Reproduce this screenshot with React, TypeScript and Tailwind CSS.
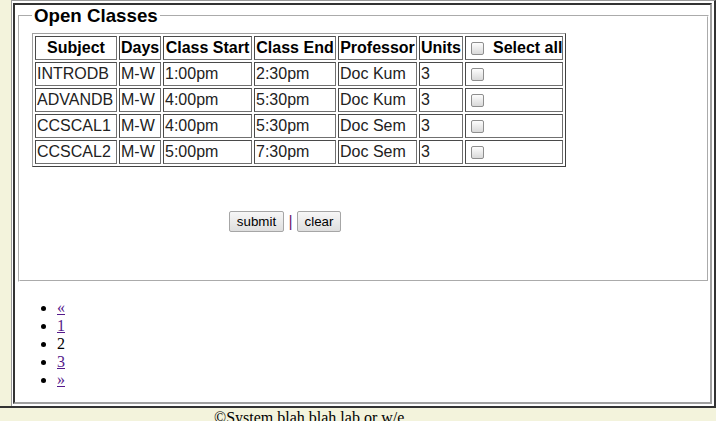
import React from "react";

type OpenClass = {
  subject: string;
  days: string;
  start: string;
  end: string;
  professor: string;
  units: string;
};

const classes: OpenClass[] = [
  { subject: "INTRODB", days: "M-W", start: "1:00pm", end: "2:30pm", professor: "Doc Kum", units: "3" },
  { subject: "ADVANDB", days: "M-W", start: "4:00pm", end: "5:30pm", professor: "Doc Kum", units: "3" },
  { subject: "CCSCAL1", days: "M-W", start: "4:00pm", end: "5:30pm", professor: "Doc Sem", units: "3" },
  { subject: "CCSCAL2", days: "M-W", start: "5:00pm", end: "7:30pm", professor: "Doc Sem", units: "3" },
];

// old-school grey checkbox
function Box() {
  return (
    <span className="block h-[13px] w-[13px] shrink-0 rounded-[2px] border border-[#8e8e8e] bg-linear-to-b from-[#fdfdfd] to-[#d9d9d9]" />
  );
}

const th =
  "h-[24px] border border-t-[#4a4a4a] border-l-[#4a4a4a] border-b-[#707070] border-r-[#707070] px-px py-px text-center align-middle font-bold text-black whitespace-nowrap";
const td =
  "h-[24px] border border-t-[#4a4a4a] border-l-[#4a4a4a] border-b-[#707070] border-r-[#707070] px-px py-px text-left align-middle text-[#222] whitespace-nowrap";

export default function App() {
  return (
    <div className="flex h-[421px] w-[716px] flex-col overflow-hidden bg-[#f3f3dc] font-['Liberation_Sans',Arial,sans-serif] text-[16px] leading-[18px]">
      {/* ── Main row ── */}
      <div className="flex h-[406px] shrink-0">
        <div className="w-[11px] shrink-0" />

        <div className="flex flex-1 border-l border-t border-l-[#9a9a9a] border-t-[#9a9a9a] bg-white pt-[2px] pb-[2px] pl-px pr-[2px] border-r-2 border-r-[#333]">
          <div className="flex flex-1 flex-col border-2 border-t-[#333] border-l-[#333] border-r-[#a0a0a0] border-b-[#a0a0a0] bg-white">
            {/* ── Open classes ── */}
            <fieldset className="ml-[3px] mr-px border-2 border-white px-[12px] pt-[6px] pb-[10px] [border-style:groove]">
              <legend className="px-[2px] text-[18.72px] leading-[22px] font-bold text-black">Open Classes</legend>

              <table className="w-[534px] table-fixed border-separate border-spacing-[2px] border border-t-[#a0a0a0] border-l-[#a0a0a0] border-b-[#404040] border-r-[#404040]">
                <colgroup>
                  <col className="w-[82px]" />
                  <col className="w-[42px]" />
                  <col className="w-[89px]" />
                  <col className="w-[82px]" />
                  <col className="w-[79px]" />
                  <col className="w-[44px]" />
                  <col className="w-[98px]" />
                </colgroup>
                <thead>
                  <tr>
                    <th className={th}>Subject</th>
                    <th className={th}>Days</th>
                    <th className={th}>Class Start</th>
                    <th className={th}>Class End</th>
                    <th className={th}>Professor</th>
                    <th className={th}>Units</th>
                    <th className={th}>
                      <div className="flex items-center">
                        <span className="ml-[4px] mr-[3px]">
                          <Box />
                        </span>
                        <span className="ml-[6px]">Select all</span>
                      </div>
                    </th>
                  </tr>
                </thead>
                <tbody>
                  {classes.map((c) => (
                    <tr key={c.subject}>
                      <td className={td}>{c.subject}</td>
                      <td className={td}>{c.days}</td>
                      <td className={td}>{c.start}</td>
                      <td className={td}>{c.end}</td>
                      <td className={td}>{c.professor}</td>
                      <td className={td}>{c.units}</td>
                      <td className={td}>
                        <span className="ml-[4px] block w-[13px]">
                          <Box />
                        </span>
                      </td>
                    </tr>
                  ))}
                </tbody>
              </table>

              {/* ── Actions ── */}
              <div className="mt-[44px] mb-[38px] flex h-[21px] items-center pl-[197px]">
                <button className="h-[21px] w-[55px] rounded-[2px] border border-[#a6a6a6] bg-linear-to-b from-[#f7f7f7] to-[#dedede] text-[13.33px] leading-[15px] text-black">
                  submit
                </button>
                <span className="w-[13px] text-center text-[16px] text-[#6e1a6e]">|</span>
                <button className="h-[21px] w-[44px] rounded-[2px] border border-[#a6a6a6] bg-linear-to-b from-[#f7f7f7] to-[#dedede] text-[13.33px] leading-[15px] text-black">
                  clear
                </button>
              </div>
            </fieldset>

            {/* ── Pager ── */}
            <ul className="mt-[17px] ml-[2px] list-disc pl-[40px] font-['Liberation_Serif','Times_New_Roman',serif] text-[16px] leading-[18px] text-black">
              <li>
                <a href="#" className="text-[#551a8b] underline">«</a>
              </li>
              <li>
                <a href="#" className="text-[#551a8b] underline">1</a>
              </li>
              <li>2</li>
              <li>
                <a href="#" className="text-[#551a8b] underline">3</a>
              </li>
              <li>
                <a href="#" className="text-[#551a8b] underline">»</a>
              </li>
            </ul>
          </div>
        </div>
      </div>

      {/* ── Footer ── */}
      <div className="flex-1 border-t-2 border-[#333] pt-px pl-[214px] font-['Liberation_Serif','Times_New_Roman',serif] text-[16px] leading-[18px] text-black">
        ©System blah blah lab or w/e
      </div>
    </div>
  );
}
